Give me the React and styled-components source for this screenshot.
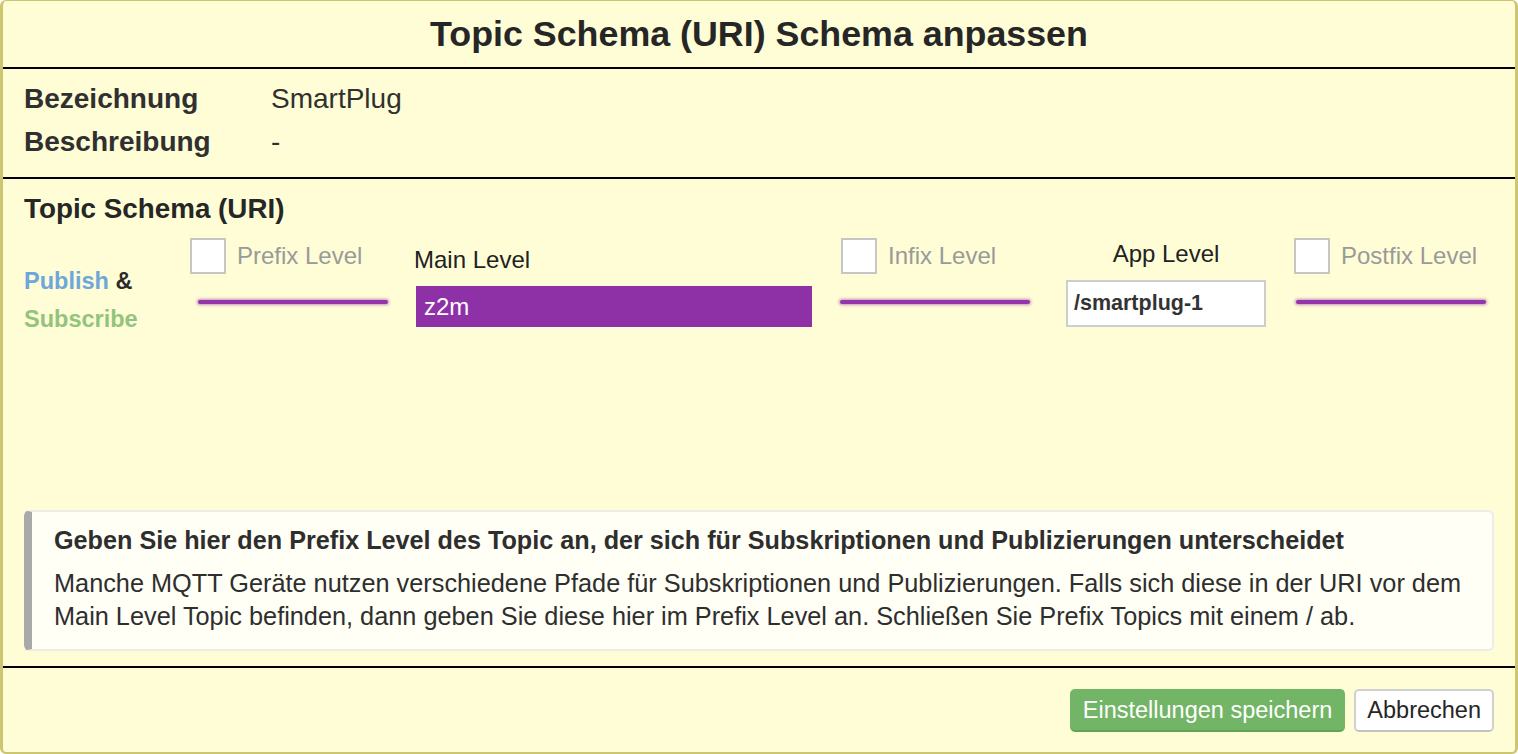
import React from "react";
import styled, { createGlobalStyle } from "styled-components";

const GlobalStyle = createGlobalStyle`
  html, body {
    margin: 0;
    padding: 0;
  }

  body {
    font-family: "Liberation Sans", Arial, Helvetica, sans-serif;
    color: #2b2b2b;
  }

  * {
    box-sizing: border-box;
  }
`;

const Dialog = styled.div`
  display: flex;
  flex-direction: column;
  width: 100%;
  height: 100vh;
  background: #fefdd6;
  border: 3px solid #cbc66f;
  border-top-width: 1px;
  border-bottom-width: 2px;
  border-radius: 6px;
  overflow: hidden;
`;

const Header = styled.header`
  display: flex;
  align-items: center;
  justify-content: center;
  height: 68px;
  border-bottom: 2px solid #000;
`;

const Title = styled.h1`
  margin: 0;
  font-size: 35.8px;
  font-weight: 700;
  color: #262626;
`;

const Meta = styled.dl`
  display: grid;
  grid-template-columns: 247px 1fr;
  grid-auto-rows: 43px;
  align-items: center;
  margin: 0;
  padding: 8px 21px 14px;
  border-bottom: 2px solid #000;
  font-size: 28px;
`;

const MetaLabel = styled.dt`
  font-weight: 700;
  color: #303030;
`;

const MetaValue = styled.dd`
  margin: 0;
  color: #303030;
`;

const Schema = styled.section`
  flex: 1;
  display: flex;
  flex-direction: column;
  padding: 14px 21px 15px;
  border-bottom: 2px solid #000;
`;

const SchemaTitle = styled.h2`
  margin: 0;
  font-size: 27.8px;
  line-height: 31px;
  font-weight: 700;
  color: #262626;
`;

const Levels = styled.div`
  display: grid;
  grid-template-columns: 139px 197px 398px 200px 200px 191px;
  column-gap: 27px;
  align-items: start;
  margin-top: 14px;
`;

const Column = styled.div`
  display: flex;
  flex-direction: column;
  align-items: ${(p) => (p.$center ? "center" : "flex-start")};
  padding-top: ${(p) => p.$top || 0}px;
`;

const Direction = styled.div`
  font-size: 23.5px;
  line-height: 38px;
  font-weight: 700;
  white-space: nowrap;
  color: ${(p) => p.$color || "#2b2b2b"};

  span {
    color: #2b2b2b;
  }
`;

const Toggle = styled.label`
  display: flex;
  align-items: center;
  gap: 11px;
  margin-left: ${(p) => p.$shift || 0}px;
  font-size: 24px;
  line-height: 36px;
  color: #9a9a9a;
  white-space: nowrap;
`;

const Box = styled.span`
  width: 36px;
  height: 36px;
  background: #fff;
  border: 2px solid #c6c6c6;
`;

const Connector = styled.div`
  width: 190px;
  height: 4px;
  margin-top: 26px;
  margin-left: ${(p) => p.$shift || 0}px;
  border-radius: 2px;
  background: #9334aa;
  box-shadow: 0 0 3px 1px rgba(147, 52, 170, 0.55);
`;

const LevelLabel = styled.div`
  font-size: 24px;
  line-height: 28px;
  color: #222;
`;

const MainInput = styled.div`
  display: flex;
  align-items: center;
  width: 396px;
  height: 41px;
  margin: 12px 0 0 2px;
  padding-left: 8px;
  background: #8f31a6;
  color: #fff;
  font-size: 24px;
`;

const AppInput = styled.div`
  display: flex;
  align-items: center;
  width: 200px;
  height: 47px;
  margin-top: 12px;
  padding-left: 6px;
  background: #fff;
  border: 2px solid #cdcdcd;
  color: #333;
  font-size: 21.5px;
  font-weight: 700;
`;

const Hint = styled.div`
  margin-top: auto;
  padding: 13px 20px 16px 22px;
  background: #fffff6;
  border: 2px solid #ececec;
  border-left: 8px solid #a9a9a9;
  border-radius: 6px;
`;

const HintTitle = styled.div`
  font-size: 25.2px;
  line-height: 30px;
  font-weight: 700;
  color: #2e2e2e;
`;

const HintText = styled.p`
  margin: 12px 0 0;
  font-size: 25.3px;
  line-height: 33px;
  color: #2e2e2e;
`;

const Footer = styled.footer`
  display: flex;
  justify-content: flex-end;
  gap: 9px;
  padding: 21px 21px 20px;
`;

const Button = styled.button`
  height: 43px;
  padding: 0 11px;
  font-family: inherit;
  font-size: 23.5px;
  border-radius: 5px;
  cursor: pointer;
  color: ${(p) => (p.$primary ? "#fff" : "#262626")};
  background: ${(p) => (p.$primary ? "#72b566" : "#fff")};
  border: 2px solid ${(p) => (p.$primary ? "#72b566" : "#d0d0d0")};
  border-bottom-color: ${(p) => (p.$primary ? "#62a456" : "#c2c2c2")};
`;

const App = () => {
  return (
    <>
      <GlobalStyle />
      <Dialog>
        <Header>
          <Title>Topic Schema (URI) Schema anpassen</Title>
        </Header>

        <Meta>
          <MetaLabel>Bezeichnung</MetaLabel>
          <MetaValue>SmartPlug</MetaValue>
          <MetaLabel>Beschreibung</MetaLabel>
          <MetaValue>-</MetaValue>
        </Meta>

        <Schema>
          <SchemaTitle>Topic Schema (URI)</SchemaTitle>
          <Levels>
            <Column $top={24}>
              <Direction $color="#6fa6dc">
                Publish <span>&amp;</span>
              </Direction>
              <Direction $color="#93c47d">Subscribe</Direction>
            </Column>

            <Column>
              <Toggle>
                <Box />
                Prefix Level
              </Toggle>
              <Connector $shift={8} />
            </Column>

            <Column $top={8}>
              <LevelLabel>Main Level</LevelLabel>
              <MainInput>z2m</MainInput>
            </Column>

            <Column>
              <Toggle $shift={2}>
                <Box />
                Infix Level
              </Toggle>
              <Connector $shift={1} />
            </Column>

            <Column $top={2} $center>
              <LevelLabel>App Level</LevelLabel>
              <AppInput>/smartplug-1</AppInput>
            </Column>

            <Column>
              <Toggle $shift={1}>
                <Box />
                Postfix Level
              </Toggle>
              <Connector $shift={3} />
            </Column>
          </Levels>

          <Hint>
            <HintTitle>
              Geben Sie hier den Prefix Level des Topic an, der sich für
              Subskriptionen und Publizierungen unterscheidet
            </HintTitle>
            <HintText>
              Manche MQTT Geräte nutzen verschiedene Pfade für Subskriptionen
              und Publizierungen. Falls sich diese in der URI vor dem Main
              Level Topic befinden, dann geben Sie diese hier im Prefix Level
              an. Schließen Sie Prefix Topics mit einem / ab.
            </HintText>
          </Hint>
        </Schema>

        <Footer>
          <Button $primary>Einstellungen speichern</Button>
          <Button>Abbrechen</Button>
        </Footer>
      </Dialog>
    </>
  );
};

export default App;
